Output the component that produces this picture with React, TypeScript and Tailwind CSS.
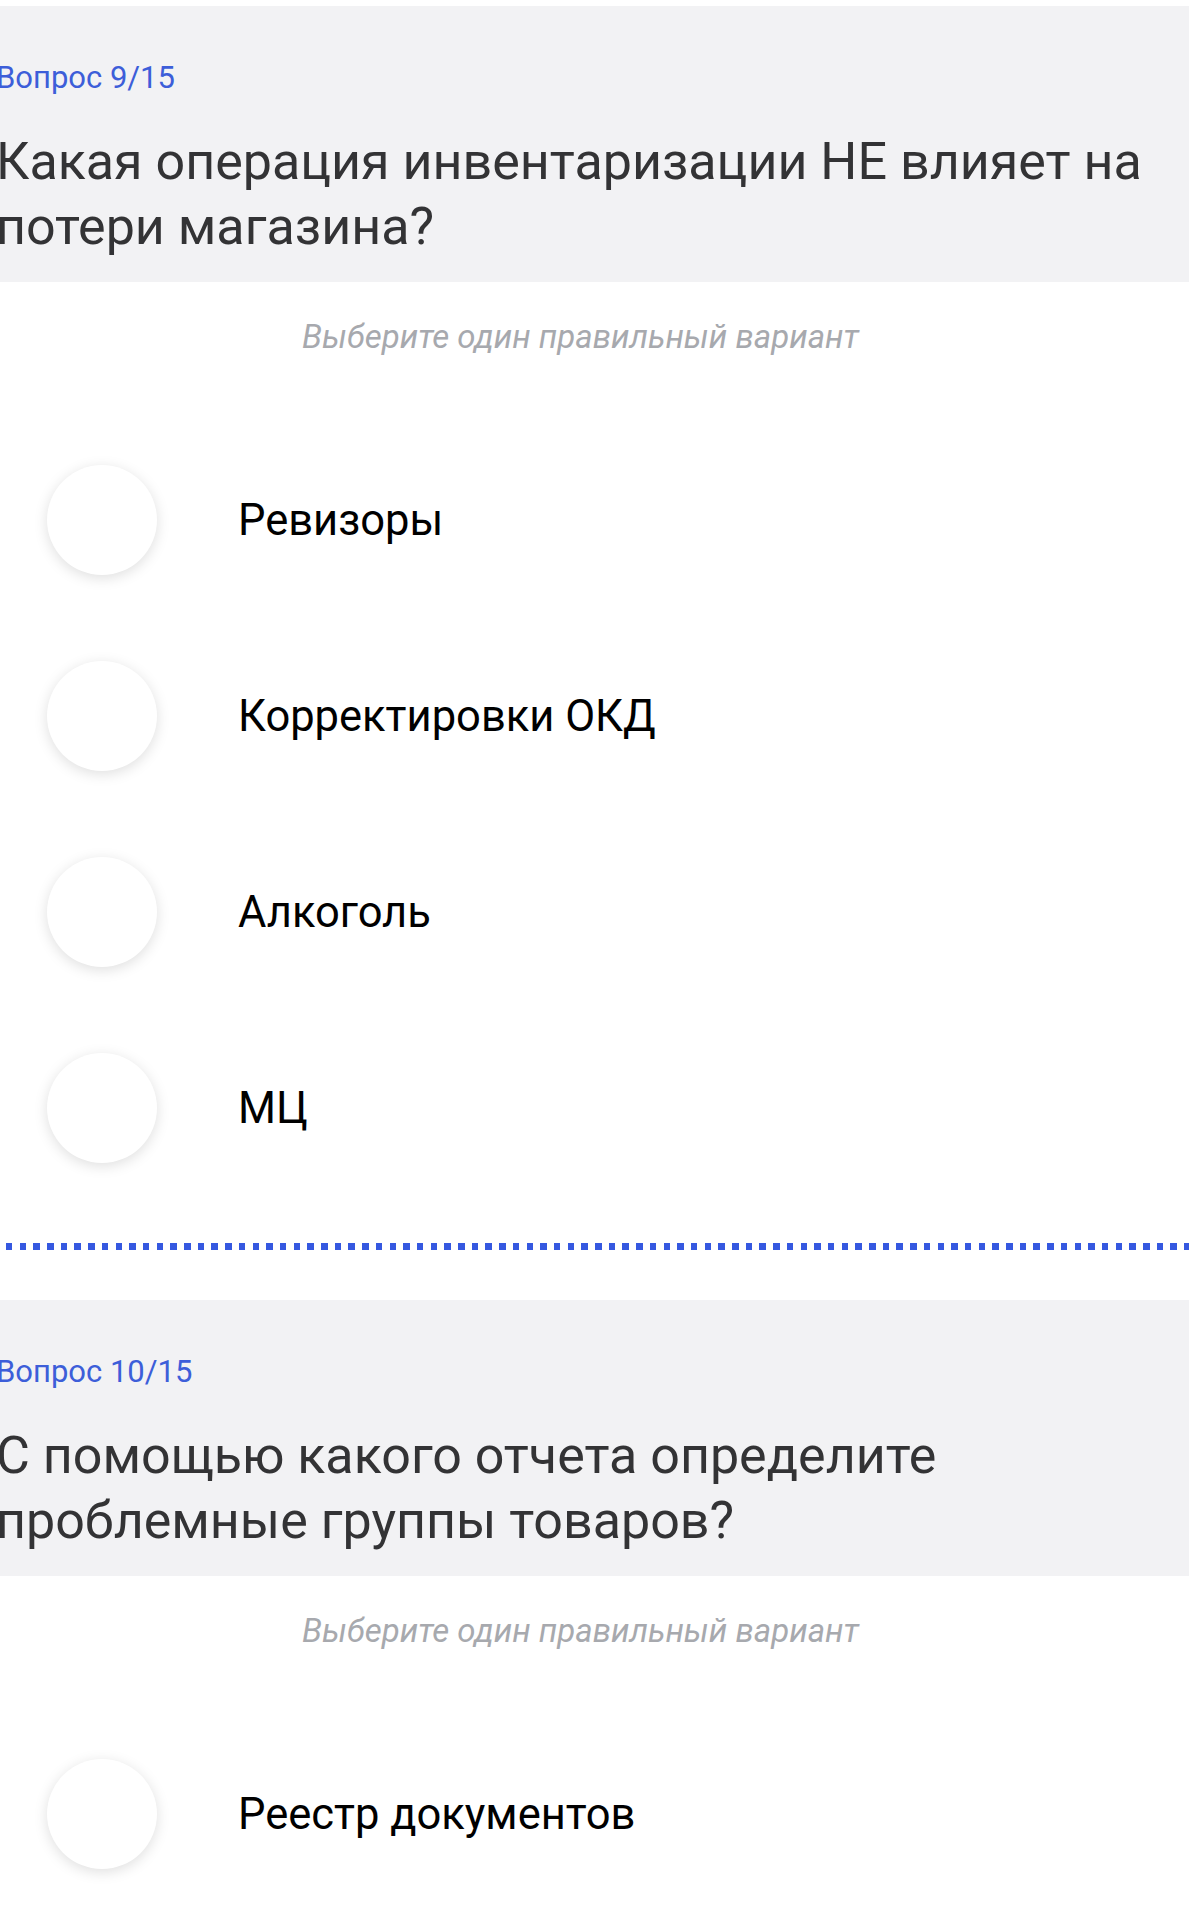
const questions = [
  {
    label: "Вопрос 9/15",
    title: "Какая операция инвентаризации НЕ влияет на потери магазина?",
    options: ["Ревизоры", "Корректировки ОКД", "Алкоголь", "МЦ"],
  },
  {
    label: "Вопрос 10/15",
    title: "С помощью какого отчета определите проблемные группы товаров?",
    options: ["Реестр документов", "Отчет по потерям", "Остатки", "Продажи"],
  },
];

function Question({ q, last }: { q: (typeof questions)[number]; last: boolean }) {
  return (
    <section>
      {/* Header */}
      <div className="h-[276px] bg-[#f2f2f4] pt-[53px] pr-[30px]">
        <div className="-ml-[4px] text-[31px] leading-[38px] text-[#3d5ed9]">{q.label}</div>
        <h2 className="-ml-[4px] mt-[32px] text-[52px] leading-[65px] text-[#333335]">{q.title}</h2>
      </div>

      {/* Hint */}
      <p className="mt-[35px] pr-[28px] text-center text-[33px] italic leading-[40px] text-[#a7a9ae]">
        Выберите один правильный вариант
      </p>

      {/* Options */}
      <div className="mt-[65px] flex flex-col">
        {q.options.map((opt) => (
          <label key={opt} className="flex h-[196px] items-center">
            <span className="ml-[47px] h-[110px] w-[110px] shrink-0 rounded-full bg-white shadow-[0_3px_14px_rgba(0,0,0,0.13)]" />
            <span className="ml-[81px] mt-[2px] text-[43.5px] leading-[52px] text-black">{opt}</span>
          </label>
        ))}
      </div>

      {!last && (
        <div className="mt-[37px] mb-[50px] h-[7px] bg-[repeating-linear-gradient(90deg,transparent_0_6px,#3558e0_6px_12.5px,transparent_12.5px_13.7px)]" />
      )}
    </section>
  );
}

export default function App() {
  return (
    <div className="min-h-screen overflow-hidden bg-white pt-[6px] font-['Roboto',sans-serif]">
      {questions.map((q, i) => (
        <Question key={q.label} q={q} last={i === questions.length - 1} />
      ))}
    </div>
  );
}
